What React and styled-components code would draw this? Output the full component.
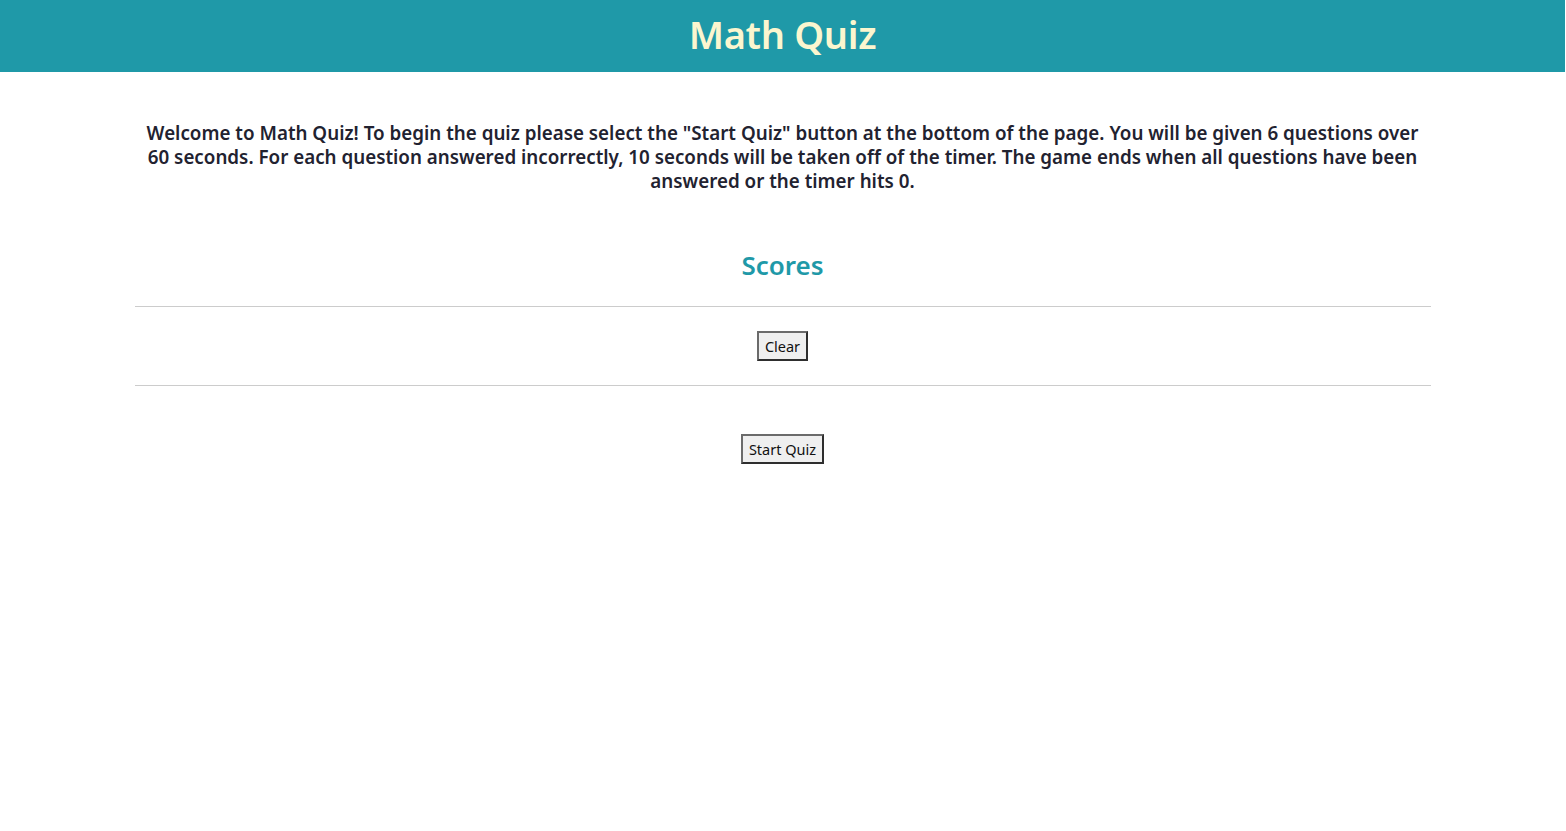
import React from 'react';
import styled, { createGlobalStyle } from 'styled-components';

const GlobalStyle = createGlobalStyle`
    body {
        margin: 0 1px 0 0;
        background: #ffffff;
        font-family: "Noto Sans", "Open Sans", sans-serif;
    }
`;

const Header = styled.header`
    height: 72px;
    padding-bottom: 4px;
    box-sizing: border-box;
    background-color: #1f99a8;
    display: flex;
    align-items: center;
    justify-content: center;
`;

const Title = styled.h1`
    margin: 0;
    color: #fbf6cf;
    font-size: 38px;
    font-weight: 600;
    letter-spacing: -0.3px;
`;

const Main = styled.main`
    width: 1296px;
    margin: 0 auto;
    display: flex;
    flex-direction: column;
    align-items: center;
`;

const Intro = styled.p`
    margin: 49px 0 0;
    padding: 0 10px;
    text-align: center;
    color: #222230;
    font-size: 18.8px;
    font-weight: 600;
    line-height: 24px;
`;

const ScoresTitle = styled.h2`
    margin: 54px 0 0;
    color: #1f99a8;
    font-size: 26px;
    font-weight: 600;
    line-height: 36px;
`;

const Divider = styled.hr`
    width: 100%;
    margin: ${(p) => p.$top}px 0 0;
    border: 0;
    border-top: 1px solid #cccccc;
`;

const Button = styled.button`
    margin-top: ${(p) => p.$top}px;
    height: 30px;
    padding: 0 6px;
    background: #efefef;
    border: 2px solid;
    border-color: #6b6b6b #2e2e2e #2e2e2e #6b6b6b;
    border-radius: 0;
    color: #111;
    font-family: "Noto Sans", "Open Sans", sans-serif;
    font-size: 14.5px;
`;

const App = () => {
    return (
        <>
            <GlobalStyle />
            <Header>
                <Title>Math Quiz</Title>
            </Header>
            <Main>
                <Intro>
                    Welcome to Math Quiz! To begin the quiz please select the "Start Quiz" button at the bottom of the page. You will be given 6 questions over 60 seconds. For each question answered incorrectly, 10 seconds will be taken off of the timer. The game ends when all questions have been answered or the timer hits 0.
                </Intro>
                <ScoresTitle>Scores</ScoresTitle>
                <Divider $top={23} />
                <Button $top={24}>Clear</Button>
                <Divider $top={24} />
                <Button $top={48}>Start Quiz</Button>
            </Main>
        </>
    );
};

export default App;
